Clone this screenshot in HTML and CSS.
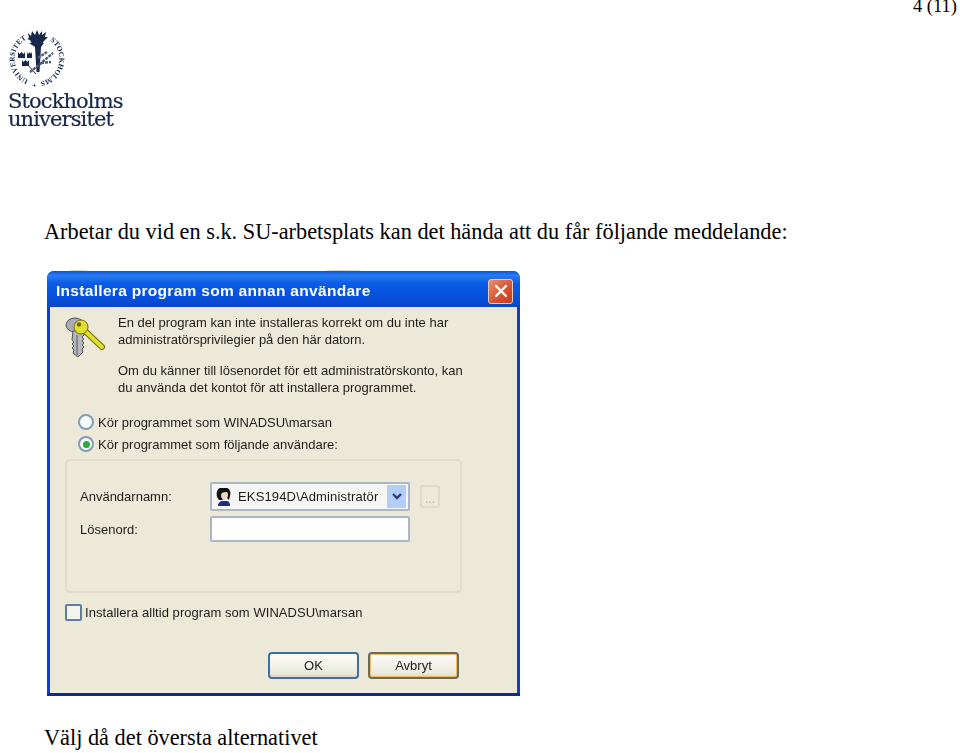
FILE: index.html
```html
<!DOCTYPE html>
<html lang="sv">
<head>
  <meta charset="UTF-8">
  <title>Arbetar du vid en s.k. SU-arbetsplats</title>
  <link rel="stylesheet" href="styles.css">
</head>
<body>
  <!-- Page header -->
  <div class="page-no">4 (11)</div>
  <div class="logo">
    <svg class="seal" width="64" height="64" viewBox="0 0 64 64">
      <defs>
        <path id="ring-left" d="M23.6 51.900 A22.500 22.500 0 0 1 24.300 9.900"/>
        <path id="ring-right" d="M44.900 12.600 A22.500 22.500 0 0 1 34 53.400"/>
      </defs>
      <text class="seal-text"><textPath href="#ring-left">UNIVERSITET</textPath></text>
      <text class="seal-text"><textPath href="#ring-right">STOCKHOLMS</textPath></text>
      <text class="seal-plus" x="27" y="60">+</text>
      <!-- flame -->
      <path fill="#16284a" d="M23 5l3 3 1-5 3 4 2-5 2 5 3-4 0 4 4-3-1 5 3 0-4 4-2 3H27l-2-4-3-1 2-1z"/>
      <!-- torch -->
      <path fill="#16284a" d="M24 15h15l-3 4-1.500 25h-3L30 19z"/>
      <!-- crowns -->
      <path fill="#16284a" d="M13 24l1.500 2 2-2 2 2 1.500-2v6h-7zM22 24l1 2 2-2 1 2 1-2v6h-5zM17 32l1.500 2 2-2 2 2 1.500-2v6h-7z"/>
      <!-- laurel -->
      <path fill="none" stroke="#4a5a78" stroke-width="2.400" stroke-dasharray="3 1" d="M25 44l10-8 13-11M36 35l10-1M33 30l9-6"/>
      <path fill="none" stroke="#16284a" stroke-width="1" d="M22 36l9 10"/>
    </svg>
    <div class="wordmark">Stockholms<br>universitet</div>
  </div>

  <p class="doc-text intro-line">Arbetar du vid en s.k. SU-arbetsplats kan det hända att du får följande meddelande:</p>

  <!-- Dialog screenshot -->
  <div class="dialog">
    <div class="titlebar">
      <span class="title">Installera program som annan användare</span>
      <span class="close">
        <svg width="14" height="14" viewBox="0 0 14 14"><path d="M2 2l10 10M12 2L2 12" stroke="#fff" stroke-width="2.400" stroke-linecap="round"/></svg>
      </span>
    </div>
    <div class="dialog-body">
      <div class="message">
        <svg class="keys" width="42" height="44" viewBox="0 0 42 44">
          <ellipse cx="10" cy="8" rx="9" ry="7" fill="#a9adb2" stroke="#4d5156"/>
          <path fill="#b5b9bd" stroke="#4d5156" d="M8 14h11v4l-2 2 2 2-2 2 2 2-2 2 2 2-2 2 1 3-5 5-5-4 1-3-2-2 2-2-2-2 2-2-2-2z"/>
          <path stroke="#55595e" d="M12 18v20"/>
          <path stroke="#6e6a12" stroke-width="6" stroke-linecap="round" d="M20 14l17 16"/>
          <path stroke="#e3dd2c" stroke-width="4" stroke-linecap="round" d="M20 14l17 16"/>
          <circle cx="16" cy="10" r="7" fill="#e3dd2c" stroke="#6e6a12"/>
          <circle cx="14" cy="7.500" r="2.200" fill="#6e6a12"/>
        </svg>
        <div class="message-text">
          <p>En del program kan inte installeras korrekt om du inte har<br>administratörsprivilegier på den här datorn.</p>
          <p>Om du känner till lösenordet för ett administratörskonto, kan<br>du använda det kontot för att installera programmet.</p>
        </div>
      </div>

      <div class="radio-row"><span class="radio"></span>Kör programmet som WINADSU\marsan</div>
      <div class="radio-row second"><span class="radio checked"></span>Kör programmet som följande användare:</div>

      <div class="group">
        <div class="field">
          <span class="field-label">Användarnamn:</span>
          <div class="combo">
            <svg width="18" height="20" viewBox="0 0 18 20">
              <path fill="#111" d="M5 1h7c3 1 4 4 3 8l-1 4-2-2c1-2 1-4 0-6L7 6c-1 2-1 4 0 5l1 2H4L2 10c-1-4 0-8 3-9z"/>
              <path fill="#e8d9c0" d="M7 6l5-1c1 2 1 4 0 6l-2 2H9l-2-2c-1-1-1-3 0-5z"/>
              <path fill="#1c2a8c" d="M3 19c0-3 2-5 5-5h3c3 0 4 2 4 5z"/>
            </svg>
            <span class="combo-value">EKS194D\Administratör</span>
            <span class="combo-arrow">
              <svg width="12" height="8" viewBox="0 0 12 8"><path d="M2 1l4 4 4-4" fill="none" stroke="#2a3f7a" stroke-width="2.400"/></svg>
            </span>
          </div>
          <span class="browse">...</span>
        </div>
        <div class="field">
          <span class="field-label">Lösenord:</span>
          <div class="input"></div>
        </div>
      </div>

      <div class="check-row"><span class="check"></span>Installera alltid program som WINADSU\marsan</div>

      <div class="buttons">
        <span class="btn btn-ok">OK</span>
        <span class="btn btn-cancel">Avbryt</span>
      </div>
    </div>
  </div>

  <p class="doc-text outro-line">Välj då det översta alternativet</p>
</body>
</html>
```

FILE: styles.css
```css
/* Base */
* {
  margin: 0;
  padding: 0;
  box-sizing: border-box;
}
html, body {
  height: 753px;
  overflow: hidden;
  background: #fff;
}
body {
  font-family: "Liberation Serif", serif;
  color: #000;
}

/* Page header */
.page-no {
  font-size: 18.5px;
  line-height: 13px;
  text-align: right;
  padding-right: 3px;
}
.logo {
  margin: 15px 0 0 5px;
  height: 106px;
}
.seal {
  display: block;
  overflow: visible;
  filter: blur(0.3px);
}
.seal-text {
  font-family: "Liberation Serif", serif;
  font-weight: 700;
  font-size: 7.4px;
  fill: #16284a;
}
.seal-plus {
  font-family: "Liberation Sans", sans-serif;
  font-size: 8px;
  fill: #16284a;
}
.wordmark {
  margin: 0 0 0 3px;
  font-family: "DejaVu Serif", serif;
  font-size: 21px;
  line-height: 18px;
  letter-spacing: -0.9px;
  color: #16284a;
  -webkit-text-stroke: 0.2px #16284a;
  filter: blur(0.35px);
}

/* Document text */
.doc-text {
  font-size: 22.3px;
  line-height: 24px;
  margin-left: 44px;
  white-space: nowrap;
}
.intro-line {
  margin-top: 86px;
}
.outro-line {
  margin-top: 30px;
}

/* Dialog screenshot */
.dialog {
  position: relative;
  width: 473px;
  height: 425px;
  margin: 27px 0 0 47px;
  display: flex;
  flex-direction: column;
  background: #0a3fd0;
  border-radius: 7px 7px 0 0;
  border-bottom: 3px solid #0a2a9e;
  padding: 0 3px 0 3px;
  font-family: "Liberation Sans", sans-serif;
  font-size: 13px;
  color: #1c1c1c;
}
/* scraps of the page behind the window, along its top edge */
.dialog::before,
.dialog::after {
  content: "";
  position: absolute;
  top: -1px;
  height: 1px;
  background: #d8d2c0;
  border-radius: 50% 50% 0 0;
}
.dialog::before {
  left: 22px;
  width: 18px;
}
.dialog::after {
  left: 278px;
  width: 36px;
}
.titlebar {
  height: 36px;
  flex: none;
  margin: 0 -3px;
  padding: 4px 7px 0 9px;
  display: flex;
  align-items: center;
  justify-content: space-between;
  border-radius: 7px 7px 0 0;
  background: linear-gradient(#0b52d8 0%, #2a7cf0 12%, #0a5be6 35%, #0650dc 75%, #0a46c4 100%);
}
.title {
  font-weight: 700;
  font-size: 15.5px;
  color: #fff;
  letter-spacing: 0.3px;
  filter: blur(0.4px);
}
.close {
  width: 25px;
  height: 25px;
  display: flex;
  align-items: center;
  justify-content: center;
  border: 1px solid #f0c8b8;
  border-radius: 3px;
  background: linear-gradient(135deg, #e89070, #d8502c 60%, #c83c1c);
  filter: blur(0.3px);
}
.dialog-body {
  flex: 1;
  display: flex;
  flex-direction: column;
  background: #ece9d8;
  padding: 0 0 0 15px;
  filter: blur(0.6px);
}

/* Message block */
.message {
  display: flex;
  padding-top: 7px;
  height: 104px;
}
.keys {
  flex: none;
  margin: 3px 11px 0 0;
}
.message-text {
  line-height: 17px;
}
.message-text p + p {
  margin-top: 14px;
}

/* Radios */
.radio-row {
  display: flex;
  align-items: center;
  height: 22px;
  margin-left: 13px;
  white-space: nowrap;
}
.radio {
  width: 16px;
  height: 16px;
  margin-right: 4px;
  border-radius: 50%;
  border: 2px solid #7f9db9;
  background: #fbfbf8;
  display: flex;
  align-items: center;
  justify-content: center;
}
.radio.checked::after {
  content: "";
  width: 7px;
  height: 7px;
  border-radius: 50%;
  background: #2fa838;
}

/* Group box */
.group {
  width: 397px;
  height: 134px;
  margin-top: 4px;
  border: 2px solid #e0ddcd;
  border-radius: 5px;
  padding: 21px 0 0 13px;
  display: flex;
  flex-direction: column;
  gap: 5px;
}
.field {
  display: flex;
  align-items: center;
}
.field-label {
  width: 130px;
  flex: none;
}
.combo {
  width: 200px;
  height: 29px;
  display: flex;
  align-items: center;
  padding: 0 2px 0 3px;
  background: #f6f6f6;
  border: 2px solid #a9b7c6;
  border-radius: 2px;
}
.combo-value {
  flex: 1;
  margin-left: 5px;
  letter-spacing: 0.15px;
  white-space: nowrap;
}
.combo-arrow {
  width: 19px;
  height: 23px;
  display: flex;
  align-items: center;
  justify-content: center;
  background: #b4cdf6;
  border-radius: 1px;
}
.browse {
  width: 20px;
  height: 23px;
  margin-left: 10px;
  display: flex;
  align-items: flex-end;
  justify-content: center;
  border: 2px solid #dedbcb;
  border-radius: 3px;
  color: #b5b2a2;
  font-size: 12px;
}
.input {
  width: 200px;
  height: 26px;
  background: #fff;
  border: 2px solid #a9b7c6;
  border-radius: 2px;
}

/* Checkbox */
.check-row {
  display: flex;
  align-items: center;
  height: 18px;
  margin-top: 10px;
  letter-spacing: 0.05px;
  white-space: nowrap;
}
.check {
  width: 17px;
  height: 17px;
  margin-right: 3px;
  background: #f4f4ee;
  border: 2px solid #5f7f9f;
  border-radius: 2px;
}

/* Buttons */
.buttons {
  display: flex;
  gap: 9px;
  margin: 31px 0 0 203px;
}
.btn {
  width: 91px;
  height: 27px;
  display: flex;
  align-items: center;
  justify-content: center;
  background: linear-gradient(#fdfdfb, #ebe8dc 85%, #d8d4c6);
  border-radius: 4px;
}
.btn-ok {
  border: 2px solid #3c6ea8;
}
.btn-cancel {
  border: 2px solid #6a6a5e;
  box-shadow: inset 0 0 0 1px #f0c060;
}
```
